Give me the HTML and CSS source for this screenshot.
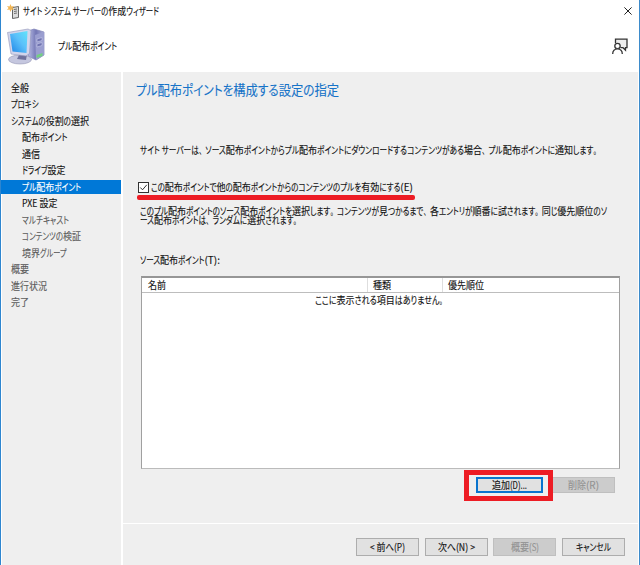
FILE: index.html
```html
<!DOCTYPE html>
<html lang="ja">
<head>
<meta charset="utf-8">
<title>サイト システム サーバーの作成ウィザード</title>
<link rel="stylesheet" href="styles.css">
</head>
<body>
<div class="window">
  <header class="titlebar">
    <svg class="app-icon" width="13" height="15" viewBox="0 0 13 15">
      <path d="M5.500 3.500l6-1v11l-6 1z" fill="#ddd" stroke="#555" stroke-width=".9"/>
      <path d="M7 5.500l3-.5M7 7.500l3-.5M7 9.500l3-.5" stroke="#555" stroke-width=".8"/>
      <path d="M3.500 0l1 2.500L7 2 5.500 4 7 6 4.500 5.500 3.500 8 2.500 5.500 0 6 1.500 4 0 2l2.500.5z" fill="#f2b654"/>
    </svg>
    <span class="fit" data-width="136">サイト システム サーバーの作成ウィザード</span>
    <svg class="close" width="8" height="8" viewBox="0 0 8 8"><path d="M.4.4l7.200 7.200M7.600.4L.4 7.600" stroke="#222" stroke-width="1"/></svg>
  </header>
  <div class="banner">
    <svg class="computer" width="38" height="38" viewBox="0 0 38 38">
      <defs>
        <linearGradient id="screen" x1="0" y1="1" x2="1" y2="0"><stop stop-color="#1c83e6"/><stop offset=".55" stop-color="#5bc0fa"/><stop offset="1" stop-color="#62e4fb"/></linearGradient>
        <linearGradient id="tower" x1="0" x2="1"><stop stop-color="#b9bde6"/><stop offset=".5" stop-color="#7377b5"/><stop offset="1" stop-color="#a9add8"/></linearGradient>
      </defs>
      <path d="M21 4L27 2l10 3v23l-8 5-8-4z" fill="url(#tower)" stroke="#7f83b7" stroke-width=".7"/>
      <path d="M28 8l9-3v23l-8 5z" fill="#9a9ed0"/>
      <path d="M30 12l5-1.500v3L30 15zM30 17l5-1.500v3L30 20z" fill="#6f73b0" stroke="#c7c9ea" stroke-width=".6"/>
      <path d="M29.500 28l6-2v3l-6 2z" fill="#73cf82"/>
      <ellipse cx="13" cy="32.500" rx="11.500" ry="4.500" fill="#c5c7df" stroke="#9697b6" stroke-width=".6"/>
      <path d="M13 26l7 1-1 6-9-1z" fill="#6f719c"/>
      <path d="M.5 5.500L21 2l3 1.500-1.500 23L19 29 4 27z" fill="#d2d5ec" stroke="#9295b8" stroke-width=".6"/>
      <path d="M3 7l17.500-3-1 22L5.500 24.500z" fill="url(#screen)"/>
    </svg>
    <span class="fit" data-width="59">プル配布ポイント</span>
    <svg class="feedback" width="16" height="17" viewBox="0 0 16 17" fill="#eee" stroke="#333" stroke-width="1.300">
      <path d="M3.500 5V1.200h11.500v8.500h-1.500v2.500L11 9.700H8.500"/>
      <circle cx="5.500" cy="8" r="2.700" fill="#fff"/><path d="M.7 16c0-3 2-5.200 4.800-5.200s4.800 2.200 4.800 5.200" fill="#fff"/>
    </svg>
  </div>
  <div class="body">
    <nav class="steps">
      <div class="step"><span class="fit" data-width="18">全般</span></div>
      <div class="step"><span class="fit" data-width="27.500">プロキシ</span></div>
      <div class="step"><span class="fit" data-width="78">システムの役割の選択</span></div>
      <div class="step sub"><span class="fit" data-width="45.500">配布ポイント</span></div>
      <div class="step sub"><span class="fit" data-width="18">通信</span></div>
      <div class="step sub"><span class="fit" data-width="43.500">ドライブ設定</span></div>
      <div class="step sub current"><span class="fit" data-width="59">プル配布ポイント</span></div>
      <div class="step sub"><span class="fit" data-width="35.500">PXE 設定</span></div>
      <div class="step sub pending"><span class="fit" data-width="47">マルチキャスト</span></div>
      <div class="step sub pending"><span class="fit" data-width="59">コンテンツの検証</span></div>
      <div class="step sub pending"><span class="fit" data-width="44.500">境界グループ</span></div>
      <div class="step pending"><span class="fit" data-width="18">概要</span></div>
      <div class="step pending"><span class="fit" data-width="36">進行状況</span></div>
      <div class="step pending"><span class="fit" data-width="18">完了</span></div>
    </nav>
    <main class="page">
      <section class="content">
        <h1><span class="fit" data-width="203" data-kanji="12.300" data-size="13.500">プル配布ポイントを構成する設定の指定</span></h1>
        <p class="intro"><span class="fit" data-width="460">サイト サーバーは、ソース配布ポイントからプル配布ポイントにダウンロードするコンテンツがある場合、プル配布ポイントに通知します。</span></p>
        <div class="option">
          <svg class="check" width="11" height="11" viewBox="0 0 11 11"><rect x=".5" y=".5" width="10" height="10" fill="#fff" stroke="#333"/><path d="M2.300 5.500l2.200 2.300 4.300-5" fill="none" stroke="#333"/></svg>
          <span class="fit" data-width="262">この配布ポイントで他の配布ポイントからのコンテンツのプルを有効にする(E)</span>
        </div>
        <div class="underline"></div>
        <div class="help">
          <span class="fit" data-width="467">このプル配布ポイントのソース配布ポイントを選択します。コンテンツが見つかるまで、各エントリが順番に試されます。同じ優先順位のソ</span>
          <span class="fit" data-width="160">ース配布ポイントは、ランダムに選択されます。</span>
        </div>
        <div class="list-label"><span class="fit" data-width="80">ソース配布ポイント(T):</span></div>
        <div class="list">
          <div class="columns">
            <div><span class="fit" data-width="18">名前</span></div>
            <div><span class="fit" data-width="18">種類</span></div>
            <div><span class="fit" data-width="36">優先順位</span></div>
          </div>
          <div class="empty"><span class="fit" data-width="131">ここに表示される項目はありません。</span></div>
        </div>
        <div class="actions">
          <div class="highlight"><div class="button focused"><span class="fit" data-width="35">追加(D)...</span></div></div>
          <div class="button disabled delete"><span class="fit" data-width="31">削除(R)</span></div>
        </div>
      </section>
      <footer class="footer">
        <div class="button"><span class="fit" data-width="35">&lt; 前へ(P)</span></div>
        <div class="button"><span class="fit" data-width="37">次へ(N) &gt;</span></div>
        <div class="button disabled"><span class="fit" data-width="28">概要(S)</span></div>
        <div class="button"><span class="fit" data-width="35">キャンセル</span></div>
      </footer>
    </main>
  </div>
</div>
<script src="fit.js"></script>
</body>
</html>
```
FILE: styles.css
```css
* { box-sizing: border-box; }
body { margin: 0; }
h1, p { margin: 0; font-weight: 400; }
svg { display: block; flex: none; }
.window {
  width: 640px; height: 565px; overflow: hidden;
  display: flex; flex-direction: column;
  background: #fff; color: #111;
  border-left: 1px solid #2e86d0; border-right: 1px solid #3d8bcb;
  font-family: "Noto Sans CJK JP", sans-serif; font-size: 10px;
}
.fit { display: block; flex: none; line-height: 12px; white-space: pre; }
.fit text { fill: currentColor; stroke: currentColor; stroke-width: .12px; white-space: pre; }
.fit .tight { font-feature-settings: "palt"; }
.titlebar { height: 22px; display: flex; align-items: center; padding: 0 7px 0 6px; }
.app-icon { margin-right: 2.500px; }
.close { margin-left: auto; }
.banner { height: 50px; display: flex; align-items: center; padding: 0 11px 2px 6px; }
.computer { margin-right: 13px; }
.feedback { margin-left: auto; }
.body { flex: 1; display: flex; gap: 2px; padding: 0 1px; }
.steps { width: 119px; background: #efefef; padding-top: 7.750px; }
.step { height: 16.500px; display: flex; align-items: center; padding-left: 9px; }
.sub { padding-left: 20px; }
.current { background: #0078d7; color: #fff; margin-left: -1px; padding-left: 21px; height: 14px; margin-top: 1.250px; margin-bottom: 1.250px; }
.pending { color: #5b5b5b; }
.page { flex: 1; display: flex; flex-direction: column; background: #fff; gap: 1px; }
.content { height: 451px; background: #efefef; padding: 9px 0 0 13px; }
h1 { color: #1673c8; }
.intro { margin-top: 46px; padding-left: 4px; }
.option { display: flex; align-items: center; gap: 2px; margin-top: 24px; padding-left: 2px; }
.underline { width: 278px; height: 5px; margin: 1px 0 0 1px; border-radius: 2px; background: #ed1c24; }
.help { margin-top: 5px; padding-left: 4px; }
.help .fit { height: 9px; }
.list-label { margin-top: 31px; padding-left: 4px; }
.list { width: 479px; height: 193px; margin: 9px 0 0 5px; background: #fff; border: 1px solid #a0a0a0; border-top: 2px solid #969696; border-bottom-color: #bbb; }
.columns { display: grid; grid-template-columns: 226px 75px 1fr; height: 15px; border-bottom: 1px solid #bdbdbd; }
.columns div { display: flex; align-items: center; padding-left: 5px; border-right: 1px solid #dedede; }
.columns div:first-child { padding-left: 6px; }
.columns div:last-child { border: 0; }
.empty { display: flex; padding: 1px 0 0 173px; }
.actions { display: flex; align-items: flex-start; margin: 1px 0 0 328px; }
.highlight { width: 89px; height: 31px; border: 5px solid #ed1c24; padding: 2px 5px 0 7px; }
.button { width: 63px; height: 18px; display: flex; align-items: center; justify-content: center; background: #e1e1e1; border: 1px solid #adadad; }
.focused { width: 67px; height: 16px; border: 2px solid #0a74ce; }
.disabled { background: #cccccc; border-color: #bfbfbf; color: #929292; }
.delete { width: 62px; height: 16px; margin-top: 7px; border-left: 0; }
.footer { flex: 1; display: flex; gap: 5.500px; padding: 14px 0 0 233px; background: #efefef; }
```
FILE: fit.js
```js
// Sets each label on kanji and punctuation of fixed width, with narrow kana filling the rest.
const NS = 'http://www.w3.org/2000/svg';
document.querySelectorAll('.fit').forEach(el => {
  const str = el.textContent;
  const width = +el.dataset.width;
  const kanji = +(el.dataset.kanji || 9);
  const size = +(el.dataset.size || 10);
  const height = Math.round(size * 1.25);
  const svg = document.createElementNS(NS, 'svg');
  svg.setAttribute('width', width);
  svg.setAttribute('height', height);
  svg.style.overflow = 'visible';
  el.textContent = '';
  el.appendChild(svg);
  const text = document.createElementNS(NS, 'text');
  text.setAttribute('font-size', size);
  text.setAttribute('y', height / 2 + size * .38);
  svg.appendChild(text);
  const hasKana = /[\u3040-\u30ff]{2}/.test(str);
  const runs = str.match(/[\u4e00-\u9fff]+|[、。]|[!-~]+|[^\u4e00-\u9fff、。!-~]+/g).map(s => {
    const t = document.createElementNS(NS, 'tspan');
    t.textContent = s;
    text.appendChild(t);
    if (/[\u4e00-\u9fff]/.test(s)) return { t, fixed: true, w: s.length * kanji };
    if (/[、。]/.test(s)) return { t, fixed: true, w: 6.5 };
    t.setAttribute('class', 'tight');
    return { t, fixed: hasKana && /[!-~]/.test(s), w: t.getComputedTextLength() };
  });
  const sum = f => runs.filter(r => r.fixed === f).reduce((a, r) => a + r.w, 0);
  const k = (width - sum(true)) / (sum(false) || 1);
  runs.forEach(r => {
    r.t.setAttribute('textLength', r.fixed ? r.w : r.w * k);
    r.t.setAttribute('lengthAdjust', 'spacingAndGlyphs');
  });
});
```
